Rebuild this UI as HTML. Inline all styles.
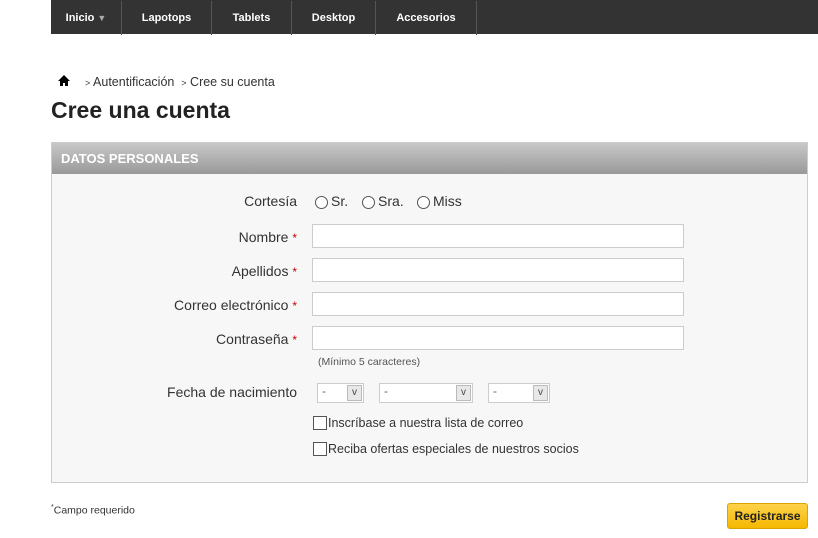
<!DOCTYPE html>
<html><head><meta charset="utf-8"><style>
body{margin:0;width:818px;height:538px;background:#fff;font-family:"Liberation Sans",sans-serif;position:relative;overflow:hidden;color:#333}
.a{position:absolute}
.nav{left:51px;top:0;width:767px;height:34px;background:#333}
.nav div{position:absolute;top:1px;height:34px;line-height:34px;color:#fff;font-size:11px;font-weight:bold;text-align:center;border-right:1px solid #555}
.lbl{font-size:14px;color:#333;text-align:right;width:250px;left:47px}
.lbl b{color:#c00;font-weight:normal;font-size:12px}
.inp{left:312px;width:370px;height:22px;border:1px solid #ccc;background:#fff}
.rad{width:11px;height:11px;border:1px solid #555;border-radius:50%;background:#fff}
.sel{height:18px;border:1px solid #ccc;background:#fff;font-size:12px;color:#666;top:383px}
.sel i{position:absolute;right:1px;top:1px;width:15px;height:16px;background:#e8e8e8;border:1px solid #bbb;box-sizing:border-box;font-style:normal;font-size:10px;line-height:14px;text-align:center;color:#444}
.cb{width:12px;height:12px;border:1px solid #555;background:#fff}
</style></head><body>
<div class="a nav">
<div style="left:0;width:70px">Inicio <span style="color:#aaa;font-size:9px">▼</span></div>
<div style="left:71px;width:89px">Lapotops</div>
<div style="left:161px;width:79px">Tablets</div>
<div style="left:241px;width:83px">Desktop</div>
<div style="left:325px;width:100px">Accesorios</div>
</div>
<svg class="a" style="left:58px;top:75px" width="12" height="11" viewBox="0 0 12 11"><path d="M6 0L0 6h2v5h3V8h2v3h3V6h2z" fill="#000"/></svg>
<div class="a" style="left:85px;top:75px;font-size:12.5px;color:#333"><span style="font-size:9px">&gt;</span> Autentificación &nbsp;<span style="font-size:9px">&gt;</span> Cree su cuenta</div>
<div class="a" style="left:51px;top:97px;font-size:23px;font-weight:bold;color:#222">Cree una cuenta</div>
<div class="a" style="left:51px;top:142px;width:755px;height:339px;border:1px solid #ccc;background:#f7f7f7"></div>
<div class="a" style="left:52px;top:143px;width:755px;height:31px;background:linear-gradient(#c8c8c8,#999)"></div>
<div class="a" style="left:61px;top:151px;font-size:13px;font-weight:bold;color:#fff">DATOS PERSONALES</div>
<div class="a lbl" style="top:193px">Cortesía</div>
<div class="a rad" style="left:315px;top:196px"></div><div class="a" style="left:331px;top:193px;font-size:14px">Sr.</div>
<div class="a rad" style="left:362px;top:196px"></div><div class="a" style="left:378px;top:193px;font-size:14px">Sra.</div>
<div class="a rad" style="left:417px;top:196px"></div><div class="a" style="left:433px;top:193px;font-size:14px">Miss</div>
<div class="a lbl" style="top:229px">Nombre <b>*</b></div><div class="a inp" style="top:224px"></div>
<div class="a lbl" style="top:263px">Apellidos <b>*</b></div><div class="a inp" style="top:258px"></div>
<div class="a lbl" style="top:297px">Correo electrónico <b>*</b></div><div class="a inp" style="top:292px"></div>
<div class="a lbl" style="top:331px">Contraseña <b>*</b></div><div class="a inp" style="top:326px"></div>
<div class="a" style="left:318px;top:356px;font-size:10.5px;color:#555">(Mínimo 5 caracteres)</div>
<div class="a lbl" style="top:384px">Fecha de nacimiento</div>
<div class="a sel" style="left:317px;width:45px"><span style="margin-left:4px">-</span><i>v</i></div>
<div class="a sel" style="left:379px;width:92px"><span style="margin-left:4px">-</span><i>v</i></div>
<div class="a sel" style="left:488px;width:60px"><span style="margin-left:4px">-</span><i>v</i></div>
<div class="a cb" style="left:313px;top:416px"></div><div class="a" style="left:328px;top:416px;font-size:12.5px">Inscríbase a nuestra lista de correo</div>
<div class="a cb" style="left:313px;top:442px"></div><div class="a" style="left:328px;top:442px;font-size:12.5px">Reciba ofertas especiales de nuestros socios</div>
<div class="a" style="left:51px;top:504px;font-size:10.5px;color:#333"><sup style="font-size:7px">*</sup>Campo requerido</div>
<div class="a" style="left:727px;top:503px;width:79px;height:24px;border:1px solid #d9a400;border-radius:3px;background:linear-gradient(#fdd34a,#f5b800);font-size:12px;font-weight:bold;color:#222;text-align:center;line-height:24px">Registrarse</div>
</body></html>
